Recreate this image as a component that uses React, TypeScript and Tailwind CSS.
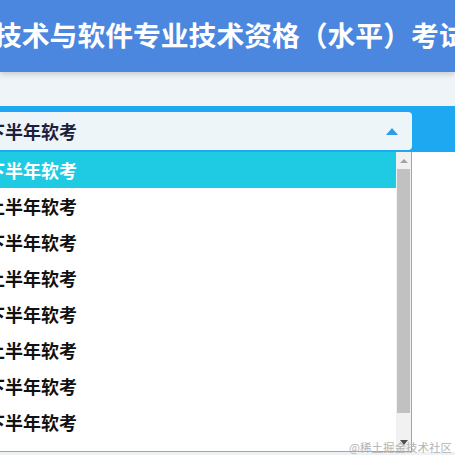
import { useState } from "react";

const items = ["下半年软考", "上半年软考", "下半年软考", "上半年软考", "下半年软考", "上半年软考", "下半年软考", "下半年软考"];

export default function App() {
  const [selected, setSelected] = useState(0);

  return (
    <main className="relative h-[455px] w-[455px] overflow-hidden bg-[#eef2f3] font-['Noto_Sans_CJK_SC',sans-serif]">
      <header className="relative z-10 flex h-[72px] items-center overflow-hidden bg-[#4b87df] shadow-[0_2px_6px_rgba(0,0,0,0.18)]">
        <h1 className="ml-[-6px] mt-[-2px] whitespace-nowrap text-[27.8px] font-bold leading-none text-white">技术与软件专业技术资格（水平）考试</h1>
      </header>
      <div className="h-[34px] bg-[#eef4f7]" />
      <div className="bg-[#1ea8f1] pt-[6px] pb-[2px]">
        <div className="flex h-[38px] w-[412px] items-center justify-between rounded-r-[4px] bg-[#eef5f9] pr-[14px]">
          <span className="ml-[-13px] text-[18px] font-bold leading-none text-[#1c1f3d]">{items[selected]}</span>
          <span className="h-0 w-0 border-x-[6px] border-b-[7px] border-x-transparent border-b-[#2a9fe8]" />
        </div>
      </div>
      <div className="flex h-[300px] bg-white">
        <div className="flex w-[412px] border-r border-b border-[#4fc6d6]">
          <ul className="flex-1">
            {items.map((item, i) => (
              <li
                key={i}
                onClick={() => setSelected(i)}
                className={`flex h-[36px] items-center text-[18px] font-bold leading-none ${i === selected ? "bg-[#1fcbe3] text-white" : "text-[#111]"}`}
              >
                <span className="ml-[-13px]">{item}</span>
              </li>
            ))}
          </ul>
          <div className="flex w-[15px] flex-col bg-[#f1f1f1]">
            <div className="flex h-[17px] items-center justify-center">
              <span className="h-0 w-0 border-x-[4px] border-b-[4px] border-x-transparent border-b-[#a3a3a3]" />
            </div>
            <div className="mx-[1px] h-[244px] bg-[#c1c1c1]" />
            <div className="flex-1" />
            <div className="flex h-[17px] items-center justify-center">
              <span className="h-0 w-0 border-x-[4px] border-t-[5px] border-x-transparent border-t-[#505050]" />
            </div>
          </div>
        </div>
      </div>
      <span className="absolute right-[3px] bottom-[2px] text-[11.5px] leading-none text-[#b4b4b4]">@稀土掘金技术社区</span>
    </main>
  );
}
